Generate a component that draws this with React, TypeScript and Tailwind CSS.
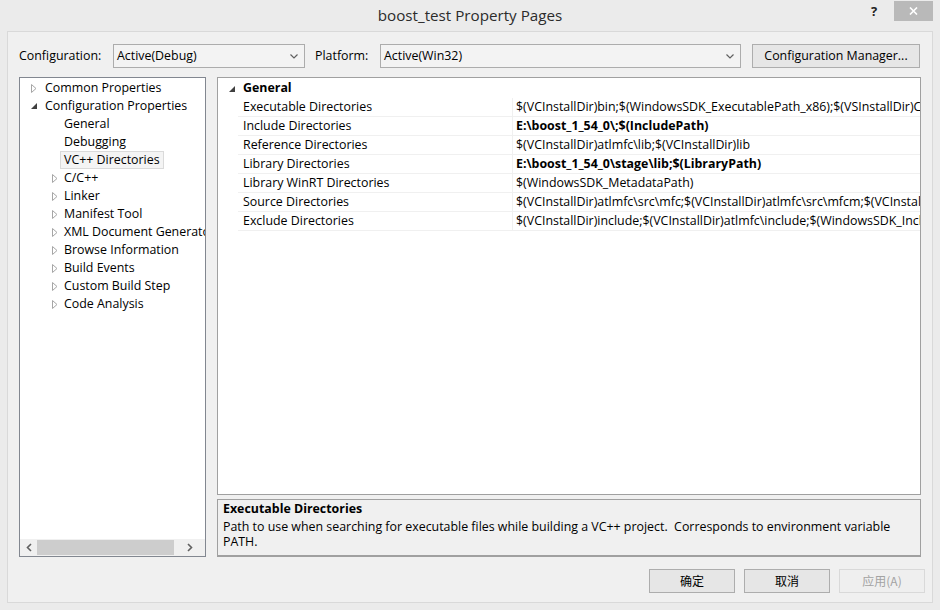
import React from "react";

const F = "font-['Open_Sans','Noto_Sans','Noto_Sans_CJK_SC',sans-serif]";

function Collapsed() {
  return (
    <svg width="6" height="9" viewBox="0 0 6 9" className="shrink-0">
      <path d="M0.5 0.5 L5 4.5 L0.5 8.5 Z" fill="white" stroke="#a6a6a6" strokeWidth="1" />
    </svg>
  );
}

function Expanded() {
  return (
    <svg width="6" height="6" viewBox="0 0 6 6" className="shrink-0">
      <path d="M6 0 L6 6 L0 6 Z" fill="#404040" />
    </svg>
  );
}

function Chevron() {
  return (
    <svg width="8" height="5" viewBox="0 0 8 5" className="shrink-0">
      <path d="M0.5 0.5 L4 4 L7.5 0.5" fill="none" stroke="#606060" strokeWidth="1.2" />
    </svg>
  );
}

function Select({ w, text }: { w: string; text: string }) {
  return (
    <div className={`${w} h-[24px] border border-[#acacac] bg-[#f3f3f3] flex items-center pl-[3px] pr-[6px] shrink-0`}>
      <span className="flex-1 text-black">{text}</span>
      <Chevron />
    </div>
  );
}

type TreeItem = { label: string; level: 0 | 1; kind: "c" | "e" | "n"; selected?: boolean };

const tree: TreeItem[] = [
  { label: "Common Properties", level: 0, kind: "c" },
  { label: "Configuration Properties", level: 0, kind: "e" },
  { label: "General", level: 1, kind: "n" },
  { label: "Debugging", level: 1, kind: "n" },
  { label: "VC++ Directories", level: 1, kind: "n", selected: true },
  { label: "C/C++", level: 1, kind: "c" },
  { label: "Linker", level: 1, kind: "c" },
  { label: "Manifest Tool", level: 1, kind: "c" },
  { label: "XML Document Generator", level: 1, kind: "c" },
  { label: "Browse Information", level: 1, kind: "c" },
  { label: "Build Events", level: 1, kind: "c" },
  { label: "Custom Build Step", level: 1, kind: "c" },
  { label: "Code Analysis", level: 1, kind: "c" },
];

const rows: { name: string; value: string; bold?: boolean }[] = [
  { name: "Executable Directories", value: "$(VCInstallDir)bin;$(WindowsSDK_ExecutablePath_x86);$(VSInstallDir)Common7\\Tools\\bin;$(VSInstallDir)Common7\\tools" },
  { name: "Include Directories", value: "E:\\boost_1_54_0\\;$(IncludePath)", bold: true },
  { name: "Reference Directories", value: "$(VCInstallDir)atlmfc\\lib;$(VCInstallDir)lib" },
  { name: "Library Directories", value: "E:\\boost_1_54_0\\stage\\lib;$(LibraryPath)", bold: true },
  { name: "Library WinRT Directories", value: "$(WindowsSDK_MetadataPath)" },
  { name: "Source Directories", value: "$(VCInstallDir)atlmfc\\src\\mfc;$(VCInstallDir)atlmfc\\src\\mfcm;$(VCInstallDir)atlmfc\\src\\atl;$(VCInstallDir)crt\\src" },
  { name: "Exclude Directories", value: "$(VCInstallDir)include;$(VCInstallDir)atlmfc\\include;$(WindowsSDK_IncludePath);$(MSBuildToolsPath32)" },
];

function Btn({ label, disabled }: { label: string; disabled?: boolean }) {
  return (
    <div
      className={`w-[86px] h-[24px] flex items-center justify-center text-[12px] font-['Noto_Sans_CJK_SC','Open_Sans',sans-serif] border ${
        disabled ? "border-[#d9d9d9] bg-[#efefef] text-[#a3a3a3]" : "border-[#adadad] bg-[#e6e6e6] text-black"
      }`}
    >
      {label}
    </div>
  );
}

export default function App() {
  return (
    <div className={`w-[940px] h-[610px] bg-[#ebebeb] flex flex-col overflow-hidden text-[12.4px] ${F}`}>
      {/* Title bar */}
      <div className="relative h-[31px] shrink-0 flex items-center justify-center">
        <span className="text-[15.2px] text-[#2b2b2b] -mt-[1px]">boost_test Property Pages</span>
        <span className="absolute left-[871px] top-[2px] text-[13px] font-bold text-[#222]">?</span>
        <div className="absolute left-[894px] top-[1px] w-[39px] h-[20px] bg-[#b9b9b9] flex items-center justify-center">
          <svg width="9" height="8" viewBox="0 0 9 8">
            <path d="M1 0.5 L8 7.5 M8 0.5 L1 7.5" stroke="white" strokeWidth="1.6" />
          </svg>
        </div>
      </div>

      {/* Body */}
      <div className="mx-[7px] mb-[7px] flex-1 min-h-0 border border-[#d9d9d9] bg-[#f0f0f0] flex flex-col pl-[11px] pr-[11px] pt-[12px] pb-[9px]">
        {/* Config row */}
        <div className="h-[24px] flex items-center text-black">
          <span className="w-[94px] shrink-0">Configuration:</span>
          <Select w="w-[192px]" text="Active(Debug)" />
          <span className="ml-[10px] w-[65px] shrink-0">Platform:</span>
          <Select w="w-[361px]" text="Active(Win32)" />
          <div className="ml-[11px] w-[168px] shrink-0 h-[24px] border border-[#adadad] bg-[#e6e6e6] flex items-center justify-center">
            Configuration Manager...
          </div>
        </div>

        {/* Main */}
        <div className="mt-[9px] h-[480px] flex gap-[11px] min-w-0">
          {/* Tree */}
          <div className="w-[187px] shrink-0 border border-[#828790] bg-white flex flex-col">
            <div className="flex-1 overflow-hidden pt-[1px]">
              {tree.map((t) => (
                <div key={t.label} className="h-[18px] flex items-center text-black whitespace-nowrap">
                  <div className={`${t.level === 0 ? "w-[25px] pl-[11px]" : "w-[44px] pl-[32px]"} flex items-center shrink-0`}>
                    {t.kind === "c" && <Collapsed />}
                    {t.kind === "e" && <Expanded />}
                  </div>
                  {t.selected ? (
                    <span className="-ml-[4px] px-[3px] h-[18px] flex items-center border border-[#dadada] bg-[#f4f4f4]">
                      {t.label}
                    </span>
                  ) : (
                    <span>{t.label}</span>
                  )}
                </div>
              ))}
            </div>
            <div className="h-[17px] bg-[#f0f0f0] flex items-center shrink-0">
              <div className="w-[17px] flex justify-center">
                <svg width="6" height="9" viewBox="0 0 6 9">
                  <path d="M5 1 L1.5 4.5 L5 8" fill="none" stroke="#606060" strokeWidth="1.6" />
                </svg>
              </div>
              <div className="w-[137px] h-[15px] bg-[#cdcdcd]" />
              <div className="flex-1 flex justify-center">
                <svg width="6" height="9" viewBox="0 0 6 9">
                  <path d="M1 1 L4.5 4.5 L1 8" fill="none" stroke="#606060" strokeWidth="1.6" />
                </svg>
              </div>
            </div>
          </div>

          {/* Right column */}
          <div className="flex-1 min-w-0 flex flex-col gap-[4px]">
            <div className="h-[418px] border border-[#a0a0a0] bg-white overflow-hidden text-black pt-[1px]">
              <div className="h-[19px] flex items-center">
                <div className="w-[25px] pl-[11px] flex items-center">
                  <Expanded />
                </div>
                <span className="font-bold">General</span>
              </div>
              {rows.map((r) => (
                <div key={r.name} className="ml-[20px] h-[19px] flex border-b border-[#f0f0f0] whitespace-nowrap min-w-0">
                  <div className="w-[275px] shrink-0 border-r border-[#f0f0f0] pl-[5px] flex items-center">{r.name}</div>
                  <div className={`flex-1 min-w-0 overflow-hidden pl-[3px] flex items-center ${r.bold ? "font-bold" : ""}`}>
                    {r.value}
                  </div>
                </div>
              ))}
            </div>
            <div className="h-[58px] border border-[#a0a0a0] border-b-2 bg-[#f0f0f0] px-[5px] text-black">
              <div className="font-bold leading-[17px]">Executable Directories</div>
              <div className="mt-[2px] leading-[15px]">
                Path to use when searching for executable files while building a VC++ project.&nbsp; Corresponds to environment variable
                <br />
                PATH.
              </div>
            </div>
          </div>
        </div>

        {/* Buttons */}
        <div className="mt-[12px] flex justify-end gap-[9px] -mr-[4px]">
          <Btn label="确定" />
          <Btn label="取消" />
          <Btn label="应用(A)" disabled />
        </div>
      </div>
    </div>
  );
}
